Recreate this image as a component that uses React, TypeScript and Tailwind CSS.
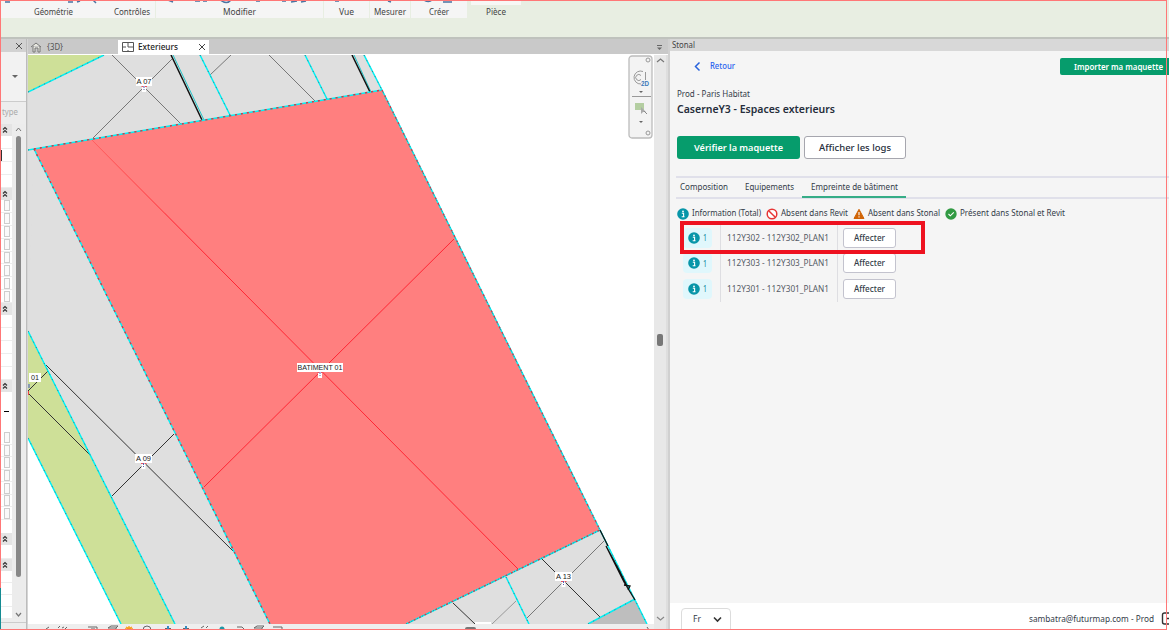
import { ReactNode } from "react";

type TProps = { x: number; y: number; w: number; size?: number; fill?: string; weight?: number; children: string };

function Label({ x, y, w, size = 8, fill = "#222", weight = 400, children }: TProps) {
  return (
    <text x={x} y={y} fontSize={size} fill={fill} fontWeight={weight} textLength={w} lengthAdjust="spacingAndGlyphs" fontFamily="Liberation Sans, sans-serif">
      {children}
    </text>
  );
}

function Fit({ w, size, children, weight = 400, fill = "#333b48" }: { w: number; size: number; children: string; weight?: number; fill?: string }) {
  return (
    <svg width={w} height={size + 6} className="block shrink-0 overflow-visible">
      <text x={0} y={size + 1} fontSize={size} fontWeight={weight} fill={fill} textLength={w} lengthAdjust="spacingAndGlyphs" fontFamily="Noto Sans, sans-serif">
        {children}
      </text>
    </svg>
  );
}

function Info({ s = 12 }: { s?: number }) {
  return (
    <svg width={s} height={s} viewBox="0 0 12 12" className="shrink-0">
      <circle cx="6" cy="6" r="5.8" fill="#0795a8" />
      <circle cx="6" cy="3.4" r="0.9" fill="#fff" />
      <path d="M4.8 5.3h1.8v3.2M4.7 8.8h2.8" stroke="#fff" strokeWidth="1.1" fill="none" />
    </svg>
  );
}

function Ribbon() {
  const groups: [string, string, number][] = [
    ["Géométrie", "w-[107px]", 39],
    ["Contrôles", "w-[48px]", 36],
    ["Modifier", "w-[168px]", 33],
    ["Vue", "w-[46px]", 15],
    ["Mesurer", "w-[41px]", 32],
    ["Créer", "w-[57px]", 20],
  ];
  return (
    <header className="flex h-[37px] shrink-0 bg-[#e8eee2]">
      <div className="flex h-[18px] bg-[#f5f5f5]">
        {groups.map(([name, width, w]) => (
          <div key={name} className={`flex items-start justify-center border-r pt-[6px] ${width} ${name === "Géométrie" ? "box-content border-[#f5f5f5]" : "border-[#e8eee2]"}`}>
            <Fit w={w} size={8} fill="#444">{name}</Fit>
          </div>
        ))}
      </div>
      <div className="ml-[3px] flex h-[18px] w-[50px] justify-center border-t-[5px] border-[#f7f7f5]">
        <div className="pt-px"><Fit w={20} size={8} fill="#444">Pièce</Fit></div>
      </div>
    </header>
  );
}

function Chevrons() {
  return (
    <svg width="6" height="8" viewBox="0 0 6 8" className="block">
      <path d="M1 3.5 3 1.5 5 3.5M1 6.5 3 4.5 5 6.5" fill="none" stroke="#333" strokeWidth="1.2" />
    </svg>
  );
}

function Head() {
  return <div className="flex h-[12px] shrink-0 items-center bg-[#e4e4e4] pl-[2px]"><Chevrons /></div>;
}

function Cells({ n, boxed = false }: { n: number; boxed?: boolean }) {
  return (
    <div className="flex min-h-0 grow flex-col">
      {Array.from({ length: n }, (_, i) => (
        <div key={i} className="flex min-h-0 grow items-center border-b border-[#ededed] pl-[4px]">
          {boxed && <div className="h-[11px] w-[6px] border border-[#cdcdcd] bg-[#fafafa]" />}
        </div>
      ))}
    </div>
  );
}

function Properties() {
  return (
    <aside className="flex w-[27px] shrink-0 flex-col border-r border-[#bcbcbc] bg-[#ededed]">
      <div className="flex h-[13px] items-center justify-end bg-[#d2d2d2] pr-[3px]">
        <svg width="8" height="8"><path d="m1 1 6 6m0-6-6 6" stroke="#555" /></svg>
      </div>
      <div className="flex h-[50px] items-center justify-end border-b border-[#ccc] bg-[#f2f2f2] pr-[8px]">
        <svg width="6" height="4"><path d="m0 0h6L3 3z" fill="#666" /></svg>
      </div>
      <div className="flex h-[22px] items-center pl-[2px]"><Fit w={16} size={8} fill="#aaa">type</Fit></div>
      <div className="flex h-[495px]">
        <div className="flex w-[12px] flex-col bg-white">
          <Head />
          <div className="relative flex h-[52px]"><Cells n={4} /><i className="absolute left-[1px] top-[14px] h-[11px] w-px bg-[#333]" /></div>
          <Head />
          <div className="flex h-[103px]"><Cells n={8} boxed /></div>
          <Head />
          <div className="flex h-[65px]"><Cells n={5} /></div>
          <Head />
          <div className="flex h-[40px] flex-col"><div className="h-[19px]" /><div className="ml-[4px] h-px w-[5px] bg-black" /><div className="grow" /></div>
          <div className="flex h-[88px]"><Cells n={7} boxed /></div>
          <div className="h-[13px]" />
          <Head />
          <div className="flex h-[14px]"><Cells n={1} /></div>
          <Head />
          <div className="flex grow"><Cells n={4} /></div>
        </div>
        <div className="flex w-[13px] flex-col items-center bg-[#ececec]">
          <svg width="7" height="12"><path d="m1 7 2.5-3L6 7" fill="none" stroke="#777" /></svg>
          <div className="h-[441px] w-[5px] rounded-full bg-[#888]" />
          <svg width="7" height="42"><path d="m1 36 2.500 3L6 36" fill="none" stroke="#777" strokeWidth="1.2" /></svg>
        </div>
      </div>
      <div className="mt-[3px] h-px bg-[#ccc]" />
    </aside>
  );
}

function Edge({ d }: { d: string }) {
  return (
    <g fill="none">
      <path d={d} stroke="#00f0f4" strokeWidth="1.5" />
      <path d={d} stroke="#42787e" strokeWidth="1" strokeDasharray="1 5" />
    </g>
  );
}

function Tag({ x, y, w, textWidth, children, mark = true }: { x: number; y: number; w: number; textWidth: number; children: string; mark?: boolean }) {
  return (
    <g>
      <rect x={x} y={y} width={w} height="9" fill="#fff" />
      <Label x={x + (w - textWidth) / 2} y={y + 7.3} w={textWidth}>{children}</Label>
      {mark && <>
        <rect x={x + w / 2 - 2} y={y + 9} width="4" height="6" fill="#fff" />
        <path d={`M${x + w / 2 - 2.5} ${y + 9.5}h2M${x + w / 2 + 1} ${y + 9.5}h2`} stroke="#ed5260" />
        <path d={`M${x + w / 2} ${y + 9}v2m0 1v1`} stroke="#5962b5" />
      </>}
    </g>
  );
}

function Plan() {
  return (
    <svg width="626" height="569" viewBox="28 55 626 569" className="block shrink-0 bg-white">
      <path d="M28 55H365L382 90 600 530 647 624H268L28 332Z" fill="#dfdfdf" />
      <path d="M28 330 46 365 175 624H268L202 487 34 149Z" fill="#dfdfdf" />
      <path d="M28 55H104L28 92Z" fill="#cee098" />
      <path d="M28 331 175 624H121L28 438Z" fill="#cee098" />
      <path d="M635 599 589 624H647Z" fill="#bebebe" />
      <g fill="none" stroke="#777" strokeWidth="1">
        <path d="M112 55 181 124M172 59 93 138M231 55 210 75M269 55 315 101M604 541 527 618" />
        <path d="M516 601 492 624" stroke="#999" />
      </g>
      <g fill="none" stroke="#333" strokeWidth="1">
        <path d="M46 365 233 551M48 371 28 391M28 393 91 456M541 558 600 617M453 603 475 624M174 434 112 496" />
      </g>
      <path d="M173 55 204 120M354 55 371 92" stroke="#20c4c8" strokeWidth="1" />
      <path d="M171 55 202 120M352 55 370 92" stroke="#111" strokeWidth="1.5" />
      <path d="M34 149 382 90 600 530 406 624H270L202 487Z" fill="#ff7f7f" />
      <path d="M91 139 518 569M454 239 204 487" fill="none" stroke="#ff2634" strokeWidth="1" />
      <path d="M91 139 165 213" stroke="#ff6060" />
      <Edge d="M28 92 104 55M200 55 230 115M305 55 327 99M364 55 382 90 600 530 647 624M28 331 175 624M28 438 121 624M506 577 529 624M588 624 635 599" />
      <Edge d="M28 150 34 149 382 90M34 149 202 487 270 624M406 624 600 530" />
      <path d="M34 149 382 90M34 149 202 487 270 624M382 90 600 530 406 624" fill="none" stroke="#df3040" strokeWidth="1.3" strokeDasharray="2 4" />
      <path d="m600 530 8 16m-2 0 18 36 11 18m-29-54 13 24 8 16m-3-1 6 1-2 4" fill="none" stroke="#101010" strokeWidth="1.3" />
      <Tag x={136} y={77} w={16} textWidth={15}>A 07</Tag>
      <Tag x={297} y={363} w={46} textWidth={45}>BATIMENT 01</Tag>
      <Tag x={135} y={454} w={17} textWidth={15}>A 09</Tag>
      <Tag x={555} y={572} w={17} textWidth={15}>A 13</Tag>
      <Tag x={29} y={373} w={12} textWidth={8} mark={false}>01</Tag>
      <path d="M29 384v4" stroke="#4057c5" /><path d="M28.500 391v4" stroke="#ed4444" />
      <rect x="475" y="622" width="16" height="2" fill="#fff" />
    </svg>
  );
}

function Navigation() {
  return (
    <svg width="25" height="84" className="absolute left-[600px] top-0 block">
      <rect x="1" y="1" width="23" height="82" rx="3" fill="#f3f3f3" stroke="#bcbcbc" strokeWidth="1.3" />
      <g fill="none" stroke="#999">
        <circle cx="20" cy="5" r="2" /><circle cx="20" cy="78" r="2" />
        <path d="M15 16.500a6.500 6.500 0 1 0-2 12.500M13 20.500a3 3 0 1 0 0 4M17.500 17v8M4 41.500h19" />
      </g>
      <Label x={13} y={31} w={8} size={7} fill="#3b78b9" weight={700}>2D</Label>
      <path d="M11 36h4l-2 2zM11 66h4l-2 2z" fill="#666" />
      <rect x="7" y="48" width="9" height="7" fill="#b4cea1" />
      <path d="m13 52 5 5-3 0-2 2z" fill="#aaa" />
      <path d="m16 56 3 3" stroke="#888" />
    </svg>
  );
}

function ViewBar() {
  return (
    <div className="h-[6px] bg-[#eee]">
      <svg width="626" height="6" viewBox="28 0 626 6" className="block" fill="none" stroke="#666">
        <path d="m46 5 3-2M58 4l2-2m2 2 2-1m1 2 2-2M88 3h9v3M91 5h4M108 4h8v2m-8-2 3-2h7l-2 2M201 4l3-2m2 2 2-2M237 3h5l2 2M254 4h8v2m-8-2 3-2h7l-2 2M273 3h9v3" />
        <circle cx="147" cy="6" r="4" /><circle cx="222" cy="5" r="2.500" fill="#1f96a4" stroke="none" />
        <path d="M125 5h8M129 2v4m-3-3 6 3m0-3-6 3" stroke="#f69c17" strokeWidth="1.3" />
        <path d="M165 5h6m12 0h6" strokeWidth="2" />
        <path d="M168 2v3m18-3v3" stroke="#358bc1" strokeWidth="2" />
        <rect x="465" y="3" width="11" height="5" rx="2" fill="#777" stroke="none" />
        <path d="m647 3 2 3" />
      </svg>
    </div>
  );
}

function Workspace() {
  return (
    <main className="flex w-[641px] shrink-0 flex-col border-l border-[#d5d5d5]">
      <div className="flex h-[15px] items-center bg-[#c9c9c9] pt-px">
        <svg width="12" height="12" className="ml-[2px]"><path d="m1 6 5-4 5 4M3 5v6h2V7h3v4h2V5" fill="#e8e8e0" stroke="#777" /></svg>
        <div className="ml-[5px] pt-[2px]"><Fit w={16} size={8} fill="#555">{"{3D}"}</Fit></div>
        <div className="ml-[55px] flex h-[14px] w-[91px] items-center bg-white pl-[4px]">
          <svg width="12" height="12" fill="none" stroke="#555"><path d="M.5 1.500h11v9H.5zM6 1v5M1 6h3m2 0h5M6 9v2" /></svg>
          <div className="ml-[4px]"><Fit w={40} size={8.5} weight={500} fill="#222">Exterieurs</Fit></div>
          <svg width="8" height="8" className="ml-[20px]"><path d="m1 1 6 6m0-6-6 6" stroke="#444" /></svg>
        </div>
        <svg width="7" height="7" className="ml-auto mr-[5px]"><path d="M1 1.500h5" stroke="#666" /><path d="M1 3.500h5L3.500 6z" fill="#666" /></svg>
      </div>
      <div className="flex h-px bg-white" />
      <div className="flex">
        <div className="relative w-[626px]"><Plan /><Navigation /><ViewBar /></div>
        <div className="flex w-[12px] flex-col items-center bg-[#e8e8e8]">
          <svg width="9" height="12"><path d="m1 7 3.500-3L8 7" fill="none" stroke="#777" strokeWidth="1.2" /></svg>
          <div className="mt-[267px] h-[12px] w-[6px] rounded-[2px] bg-[#777]" />
          <svg width="9" height="12" className="mt-[267px]"><path d="m1 4 3.500 3L8 4" fill="none" stroke="#888" strokeWidth="1.2" /></svg>
        </div>
        <div className="grow bg-[#dedede]" />
      </div>
    </main>
  );
}

function Legend({ icon, text, w }: { icon: ReactNode; text: string; w: number }) {
  return <div className="flex items-center gap-[3px]">{icon}<Fit w={w} size={8.5}>{text}</Fit></div>;
}

function StonalPanel() {
  return (
    <section className="flex min-w-0 grow flex-col bg-[#f5f5f5]">
      <div className="flex h-[12px] shrink-0 items-center bg-[#d8d8d8] pl-[2px] pt-[2px]"><Fit w={23} size={8} fill="#444">Stonal</Fit></div>
      <div className="flex h-[35px] items-start justify-between pl-[24px] pt-[7px]">
        <div className="flex items-center pt-[1px]">
          <svg width="7" height="11"><path d="M5.500 1.500 1.500 5.500l4 4" fill="none" stroke="#2863dc" strokeWidth="1.5" /></svg>
          <div className="ml-[9px]"><Fit w={25} size={8.5} weight={500} fill="#2863ef">Retour</Fit></div>
        </div>
        <button className="flex h-[17px] w-[109px] items-center rounded-l-[2px] bg-[#069c6c] pl-[14px] pt-px"><Fit w={89} size={8.5} weight={600} fill="#fff">Importer ma maquette</Fit></button>
      </div>
      <div className="flex h-[50px] flex-col pl-[7px] pt-[0.5px]">
        <Fit w={73} size={8.5}>Prod - Paris Habitat</Fit>
        <div className="pt-[0.5px]"><Fit w={158} size={10} weight={600} fill="#252d3b">CaserneY3 - Espaces exterieurs</Fit></div>
      </div>
      <div className="flex h-[40px] gap-[4px] pl-[7px]">
        <button className="flex h-[23px] w-[123px] items-center justify-center rounded-[3px] bg-[#069c6c]"><Fit w={89} size={9.5} weight={600} fill="#fff">Vérifier la maquette</Fit></button>
        <button className="flex h-[23px] w-[102px] items-center justify-center rounded-[3px] border border-[#a6a6ae] bg-white"><Fit w={72} size={9.5} weight={500} fill="#252d3b">Afficher les logs</Fit></button>
      </div>
      <nav className="ml-[6px] flex h-[23px] shrink-0 border-b-2 border-t-2 border-[#e0e0ea] pl-[4px]">
        <div className="mt-[2px] flex w-[65px] items-start"><Fit w={48} size={8.5}>Composition</Fit></div>
        <div className="mt-[2px] flex w-[57px] items-start"><Fit w={49} size={8.5}>Equipements</Fit></div>
        <div className="flex h-[20px] w-[104px] items-start justify-center border-b-2 border-[#36ad87] pt-[2px]"><Fit w={87} size={8.5}>Empreinte de bâtiment</Fit></div>
      </nav>
      <div className="mt-[7px] flex h-[15px] items-center gap-[5px] pl-[7px]">
        <Legend icon={<Info s={12} />} text="Information (Total)" w={69} />
        <Legend w={67} text="Absent dans Revit" icon={<svg width="12" height="12"><circle cx="6" cy="6" r="4.8" fill="#fff" stroke="#e73535" strokeWidth="1.5" /><path d="m2.700 2.700 6.600 6.600" stroke="#e73535" strokeWidth="1.5" /></svg>} />
        <Legend w={72} text="Absent dans Stonal" icon={<svg width="12" height="12"><path d="m6 1.300 5 9.200H1z" fill="#d06406" stroke="#d06406" strokeLinejoin="round" /><path d="M6 4v3.200M6 8.300v1.200" stroke="#fff" strokeWidth="1.1" /></svg>} />
        <Legend w={105} text="Présent dans Stonal et Revit" icon={<svg width="12" height="12"><circle cx="6" cy="6" r="5.700" fill="#319a43" /><path d="m3.500 6 1.800 1.800L8.800 4.300" fill="none" stroke="#fff" strokeWidth="1.1" /></svg>} />
      </div>
      <div className="relative ml-[13px] mt-[4px] flex w-[230px] flex-col">
        {["112Y302 - 112Y302_PLAN1", "112Y303 - 112Y303_PLAN1", "112Y301 - 112Y301_PLAN1"].map((plan) => (
          <div key={plan} className="flex h-[25.500px] items-center">
            <div className="flex h-[20px] w-[29px] items-center gap-[3px] rounded-[4px] bg-[#e0f7fc] pl-[5px]"><Info /><div className="pt-[1px]"><Fit w={4} size={8.5} fill="#14859b">1</Fit></div></div>
            <div className="ml-[8px] flex h-full w-[118px] items-center border-x border-[#dedee2] pl-[6px]"><Fit w={102} size={8.5} fill="#555b65">{plan}</Fit></div>
            <button className="ml-[5px] flex h-[20px] w-[53px] items-center justify-center rounded-[3px] border border-[#c3c3ce] bg-white"><Fit w={31} size={8.5} weight={500}>Affecter</Fit></button>
          </div>
        ))}
        <div className="absolute left-[-3px] top-[-4px] h-[33px] w-[245px] border-4 border-[#ee1220]" />
      </div>
      <footer className="mt-auto flex h-[27px] shrink-0 items-start bg-white pl-[11px] pt-[5px]">
        <div className="flex h-[25px] w-[50px] items-center rounded-t-[4px] border border-[#dcdcdc] pb-[3px] pl-[11px]">
          <Fit w={8} size={9}>Fr</Fit>
          <svg width="9" height="7" className="ml-[12px]"><path d="m1 1.500 3.500 3.500L8 1.500" fill="none" stroke="#333" strokeWidth="1.6" /></svg>
        </div>
        <div className="ml-[298px] mt-[4px] flex"><Fit w={125} size={8.5}>sambatra@futurmap.com - Prod</Fit></div>
        <svg width="8" height="13" className="ml-[7px] mt-[4px]"><path d="M8 1H3.500Q1.500 1 1.500 3v7q0 2 2 2H8M5 6.500h3" fill="none" stroke="#333" strokeWidth="1.4" /></svg>
      </footer>
    </section>
  );
}

export default function App() {
  return (
    <div className="relative flex h-[630px] w-[1169px] flex-col overflow-hidden bg-white font-['Noto_Sans',sans-serif]">
      <Ribbon />
      <div className="h-[2px] shrink-0 bg-[#bfc2bd]" />
      <div className="flex h-[591px] overflow-hidden">
        <Properties /><Workspace />
        <div className="w-[2px] shrink-0 bg-[#d0d0d0]" />
        <StonalPanel />
      </div>
      <svg width="500" height="4" className="absolute left-0 top-0"><path d="M5 2h5M68 2h5m4 0 3-1M93 0l3 3M168 0l5 2M195 1h5m3 0h4M220 0q7 5 11 0M256 1h4m22 0h4m5 1 6-1m4 1 5-1M335 1h4M388 1l3 1M424 0q5 3 8 0M443 2h9" fill="none" stroke="#4b73a1" strokeWidth="1.5" /></svg>
      <div className="pointer-events-none absolute left-0 top-0 h-[630px] w-[1167px] border border-[#ff7777]" />
      <div className="absolute left-0 top-[588px] h-[41px] w-px bg-[#148b92]" />
    </div>
  );
}
